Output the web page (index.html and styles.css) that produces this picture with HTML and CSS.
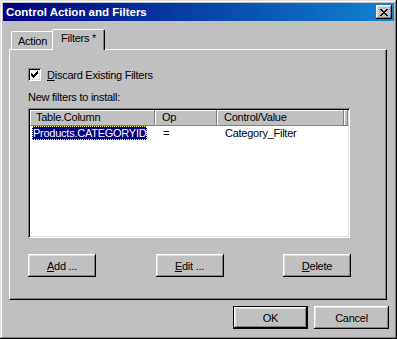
FILE: index.html
```html
<!DOCTYPE html>
<html>
<head>
    <title>Control Action and Filters</title>
    <link rel="stylesheet" href="styles.css">
</head>
<body>
    <div class="window">
        <div class="title-bar">
            <span class="title-text">Control Action and Filters</span>
            <div class="close-button">
                <svg width="8" height="7" viewBox="0 0 8 7" shape-rendering="crispEdges">
                    <path d="M0 0h2v1h-2z M6 0h2v1h-2z M1 1h2v1h-2z M5 1h2v1h-2z M2 2h4v1h-4z M3 3h2v1h-2z M2 4h4v1h-4z M1 5h2v1h-2z M5 5h2v1h-2z M0 6h2v1h-2z M6 6h2v1h-2z" fill="#000"/>
                </svg>
            </div>
        </div>
        <div class="window-body">
            <div class="tabs">
                <div class="tab">Action</div>
                <div class="tab active">Filters *</div>
            </div>
            <div class="tab-panel">
                <div class="check-row">
                    <span class="checkbox">
                        <svg width="7" height="7" viewBox="0 0 7 7" shape-rendering="crispEdges">
                            <path d="M6 0h1v1h-1z M5 1h2v1h-2z M0 2h1v1h-1z M4 2h3v1h-3z M0 3h2v1h-2z M3 3h3v1h-3z M0 4h5v1h-5z M1 5h3v1h-3z M2 6h1v1h-1z" fill="#000"/>
                        </svg>
                    </span>
                    <span class="check-label"><u>D</u>iscard Existing Filters</span>
                </div>
                <div class="list-label">New filters to install:</div>
                <div class="list-view">
                    <div class="list-header">
                        <div class="head col-table">Table.Column</div>
                        <div class="head col-op">Op</div>
                        <div class="head col-value">Control/Value</div>
                        <div class="head col-fill"></div>
                    </div>
                    <div class="list-row">
                        <div class="cell col-table"><span class="selected">Products.CATEGORYID</span></div>
                        <div class="cell col-op">=</div>
                        <div class="cell col-value">Category_Filter</div>
                    </div>
                </div>
                <div class="panel-buttons">
                    <div class="button"><u>A</u>dd ...</div>
                    <div class="button"><u>E</u>dit ...</div>
                    <div class="button"><u>D</u>elete</div>
                </div>
            </div>
            <div class="dialog-buttons">
                <div class="button default">OK</div>
                <div class="button">Cancel</div>
            </div>
        </div>
    </div>
</body>
</html>
```

FILE: styles.css
```css
* {
    margin: 0;
    padding: 0;
    box-sizing: border-box;
}

body {
    font-family: 'Liberation Sans', Arial, sans-serif;
    font-size: 11px;
    letter-spacing: -0.25px;
    color: #000;
    background: #c0c0c0;
}

.window {
    width: 397px;
    height: 339px;
    padding: 3px;
    background: #c0c0c0;
    box-shadow: inset -1px -1px #000, inset 1px 1px #dfdfdf,
                inset -2px -2px #808080, inset 2px 2px #fff;
}

/* Barra de titulo */
.title-bar {
    height: 18px;
    display: flex;
    align-items: center;
    justify-content: space-between;
    padding: 0 2px 0 3px;
    background: linear-gradient(to right, #000080, #1084d0);
}

.title-text {
    color: #fff;
    font-weight: bold;
    font-size: 11.5px;
    letter-spacing: 0;
}

.close-button {
    width: 16px;
    height: 14px;
    display: flex;
    align-items: center;
    justify-content: center;
    background: #c0c0c0;
    box-shadow: inset -1px -1px #000, inset 1px 1px #fff,
                inset -2px -2px #808080, inset 2px 2px #dfdfdf;
}

.window-body {
    padding: 8px 7px 0 6px;
}

/* Pestanas */
.tabs {
    height: 20px;
    display: flex;
    align-items: flex-end;
    padding-left: 2px;
}

.tab {
    height: 18px;
    padding: 3px 6px 0 6px;
    border-top: 1px solid #fff;
    border-left: 1px solid #fff;
    border-right: 1px solid #000;
    border-radius: 2px 2px 0 0;
    box-shadow: inset -1px 0 #808080;
    background: #c0c0c0;
}

.tab.active {
    position: relative;
    z-index: 1;
    height: 21px;
    margin: 0 -2px -1px -2px;
    padding: 2px 8px 0 8px;
}

.tab-panel {
    height: 251px;
    padding: 18px 18px 0 18px;
    border-top: 1px solid #fff;
    border-left: 1px solid #fff;
    border-right: 1px solid #000;
    border-bottom: 1px solid #000;
    box-shadow: inset -1px -1px #808080;
}

.check-row {
    height: 13px;
    display: flex;
    align-items: center;
    gap: 6px;
}

.checkbox {
    width: 13px;
    height: 13px;
    display: flex;
    align-items: center;
    justify-content: center;
    background: #fff;
    box-shadow: inset 1px 1px #808080, inset -1px -1px #fff,
                inset 2px 2px #000, inset -2px -2px #dfdfdf;
}

.list-label {
    margin-top: 10px;
    height: 13px;
    line-height: 13px;
}

/* Lista de filtros */
.list-view {
    margin-top: 4px;
    width: 322px;
    height: 130px;
    padding: 2px;
    background: #fff;
    box-shadow: inset 1px 1px #808080, inset -1px -1px #fff,
                inset 2px 2px #000, inset -2px -2px #dfdfdf;
}

.list-header {
    display: flex;
    height: 16px;
}

.head {
    height: 16px;
    line-height: 15px;
    padding-left: 7px;
    background: #c0c0c0;
    box-shadow: inset -1px -1px #808080, inset 1px 1px #fff;
}

.list-header .col-table {
    padding-left: 6px;
}

.col-table { width: 125px; }
.col-op { width: 62px; }
.col-value { width: 127px; }
.col-fill { flex: 1; padding: 0; }

.list-row {
    display: flex;
    height: 14px;
    line-height: 14px;
}

.cell {
    padding-left: 8px;
}

.list-row .col-table {
    padding-left: 2px;
}

.selected {
    display: inline-block;
    height: 14px;
    padding: 0 1px;
    background: #000080;
    color: #fff;
    outline: 1px dotted #ffff80;
    outline-offset: -1px;
}

/* Botones */
.panel-buttons {
    margin-top: 16px;
    width: 323px;
    display: flex;
    justify-content: space-between;
}

.button {
    width: 68px;
    height: 23px;
    display: flex;
    align-items: center;
    justify-content: center;
    background: #c0c0c0;
    box-shadow: inset -1px -1px #000, inset 1px 1px #fff,
                inset -2px -2px #808080, inset 2px 2px #dfdfdf;
}

.dialog-buttons {
    margin-top: 6px;
    display: flex;
    justify-content: flex-end;
    gap: 6px;
    margin-right: -2px;
}

.dialog-buttons .button {
    width: 75px;
}

.button.default {
    border: 1px solid #000;
}
```
